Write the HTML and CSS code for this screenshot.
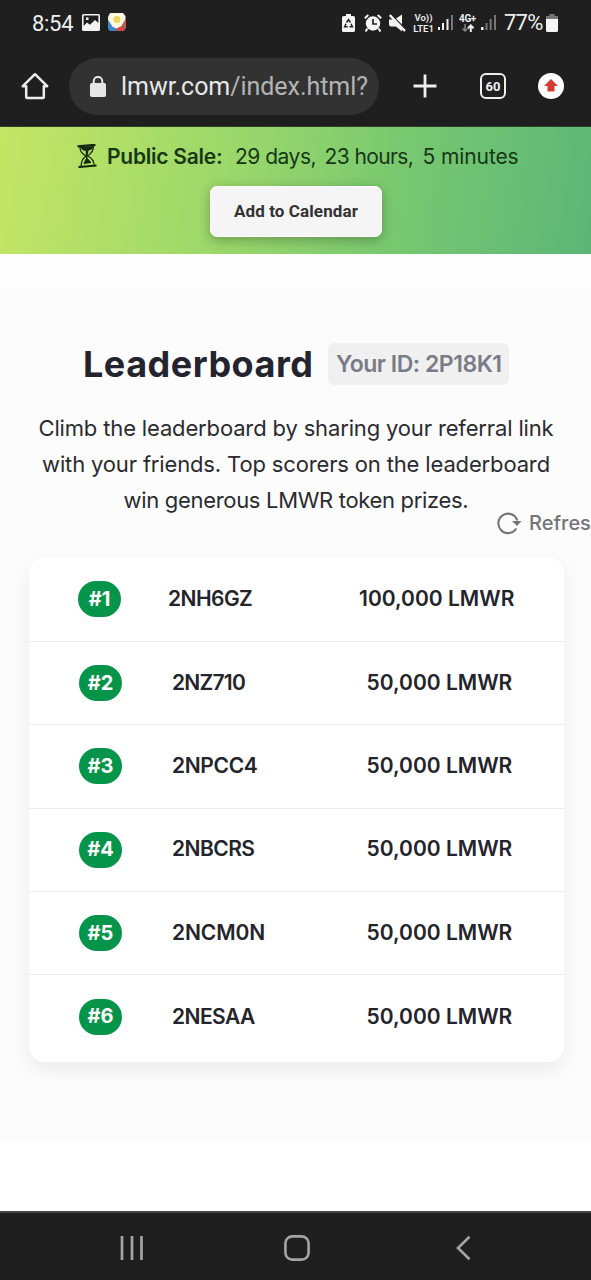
FILE: index.html
```html
<!DOCTYPE html>
<html lang="en">
<head>
<meta charset="utf-8">
<title>Leaderboard</title>
<link rel="stylesheet" href="styles.css">
</head>
<body>
<div class="screen">
  <header class="chrome">
    <div class="status">
      <span class="clock">8:54</span>
      <svg class="ic-photo" width="18" height="17" viewBox="0 0 18 17"><path fill="#f2f2f2" fill-rule="evenodd" d="M1.500 0H16.500Q18 0 18 1.500V15.500Q18 17 16.500 17H1.500Q0 17 0 15.500V1.500Q0 0 1.500 0ZM1.600 1.600V12L5 8.500L8 10.800L13 6L16.400 9V1.600ZM4 3.500H6.500V6H4Z"/></svg>
      <svg class="ic-app" width="18" height="18" viewBox="0 0 18 18"><path fill="#f4f1df" d="M2 0H15L17.500 3V15L15 18H3L0 14V4Z"/><path fill="#3f86cc" d="M0 7L5 14L8 15V18H3Q0 18 0 14Z"/><path fill="#c94a48" d="M17.500 6L13.500 13L8 15V18H14Q17.500 18 17.500 14Z"/><path fill="#fff9e5" d="M2 1H15L13 13L8.500 15.500L4 13Z"/><circle cx="9" cy="6.500" r="3.600" fill="#efd75c"/></svg>
      <div class="status-right">
        <svg width="13" height="18" viewBox="0 0 13 18"><path fill="#f4f4f4" d="M4 0H9V2H11.500Q13 2 13 3.500V16.500Q13 18 11.500 18H1.500Q0 18 0 16.500V3.500Q0 2 1.500 2H4Z"/><path fill="none" stroke="#222" stroke-width="1.500" d="M4.600 8.500L6.500 5.600L8.400 8.500M9 9.800L10.400 12.800H7.500M5.700 12.800H2.600L4 9.800"/></svg>
        <svg class="ic-alarm" width="18" height="18" viewBox="0 0 18 18"><circle cx="9" cy="9.500" r="7.200" fill="#f4f4f4"/><path stroke="#f4f4f4" stroke-width="2" d="M.800 4.300L4.300 1M17.200 4.300L13.700 1M3.500 14.500L1.500 17.500M14.500 14.500L16.500 17.500"/><path fill="none" stroke="#222" stroke-width="1.700" d="M9 5V10H13"/></svg>
        <svg class="ic-mute" width="17" height="18" viewBox="0 0 17 18"><path fill="#f4f4f4" d="M0 5.500H4L13 14V17.500L7 12.500H2Q0 12.500 0 10.500ZM7 4.500L13 .500V10.500Z"/><path stroke="#f4f4f4" stroke-width="2.400" d="M.800 1L16 17"/></svg>
        <span class="volte"><b>Vo))</b><b>LTE1</b></span>
        <svg class="ic-sig" width="15" height="17" viewBox="0 0 15 17"><path fill="#eee" d="M0 13H2V16H0ZM4 9H6V16H4ZM8.500 5H10.500V16H8.500Z"/><path fill="#777" d="M13 1H15V16H13Z"/></svg>
        <span class="net"><b>4G+</b><svg width="12" height="8" viewBox="0 0 12 8"><path fill="none" stroke="#888" stroke-width="1.400" d="M3 0V7M.500 4.500L3 7L5.500 4.500"/><path fill="none" stroke="#eee" stroke-width="2" d="M8.800 8V1.500M6 4.300L8.800 1.500L11.600 4.300"/></svg></span>
        <svg class="ic-sig2" width="15" height="17" viewBox="0 0 15 17"><path fill="#eee" d="M0 13H2.500V16H0Z"/><path fill="#777" d="M4.500 9H6.500V16H4.500ZM8.700 5H10.700V16H8.700ZM13 1H15V16H13Z"/></svg>
        <span class="pct">77%</span>
        <svg class="ic-batt" width="12" height="18" viewBox="0 0 12 18"><path fill="#777" d="M3.500 0H8.500V2H12V5H0V2H3.500Z"/><path fill="#f4f4f4" d="M0 5H12V16.500Q12 18 10.500 18H1.500Q0 18 0 16.500Z"/></svg>
      </div>
    </div>
    <div class="toolbar">
      <svg class="ic-home" width="28" height="28" viewBox="0 0 28 28"><path fill="none" stroke="#eee" stroke-width="2.500" stroke-linejoin="round" d="M1.800 14.200L14 2.200L26.200 14.200H22.800V25Q22.800 26 21.800 26H6.200Q5.200 26 5.200 25V14.200Z"/></svg>
      <div class="url">
        <svg width="16" height="21" viewBox="0 0 16 21"><rect y="7" width="16" height="14" rx="1.800" fill="#e6e6e6"/><path fill="none" stroke="#e6e6e6" stroke-width="2" d="M3.700 8V5.200A4.300 4.300 0 0 1 12.300 5.200V8"/></svg>
        <span class="address">lmwr.com<i>/index.html?</i></span>
      </div>
      <svg class="ic-plus" width="24" height="24" viewBox="0 0 24 24"><path stroke="#eee" stroke-width="2.800" d="M12 .500V23.500M.500 12H23.500"/></svg>
      <span class="tabs">60</span>
      <svg class="ic-update" width="26" height="26" viewBox="0 0 26 26"><circle cx="13" cy="13" r="13" fill="#fff"/><path fill="#d43a31" d="M13 6L20 13H16.500V18.500H9.500V13H6Z"/></svg>
    </div>
  </header>

  <section class="banner">
    <div class="sale">
      <svg width="20" height="24" viewBox="0 0 20 24"><g fill="none" stroke="#14290f"><path stroke-width="2.200" d="M.500 2.300L18.500 .800M1.500 23L19.500 21.500"/><path stroke-width="1.300" d="M3 3C3 8 5 9.500 9 12C5 15 4 17.500 4.300 22M16.500 2C16.500 7 14.500 9.500 10.500 12C15 14 17 17 17.200 21.500"/></g><path fill="#14290f" d="M3.500 3L16.500 2Q15.500 6 11.500 6.500L10.300 14Q13.500 17 14.500 19L6.500 20Q7 17.500 9 14.500L8.700 7Q4.500 6.500 3.500 3Z"/></svg>
      <b class="sale-label">Public Sale:</b>
      <span class="days">29 days,</span><span class="hours">23 hours,</span><span class="minutes">5 minutes</span>
    </div>
    <button class="calendar">Add to Calendar</button>
  </section>

  <main class="content">
    <div class="title-row"><h1>Leaderboard</h1><span class="user-id"><span>Your ID: 2P18K1</span></span></div>
    <p class="intro"><span class="l1">Climb the leaderboard by sharing your referral link</span><br><span class="l2">with your friends. Top scorers on the leaderboard</span><br><span class="l3">win generous LMWR token prizes.</span></p>
    <div class="refresh">
      <svg width="26" height="24" viewBox="0 0 26 24"><path fill="none" stroke="#747477" stroke-width="2.100" d="M20.300 17.500A9.700 9.700 0 1 1 21.300 9.500"/><path fill="#747477" d="M16 10H25.500L21 15Z"/></svg>
      <span>Refresh</span>
    </div>
    <div class="board">
      <div class="row first"><b class="rank">#1</b><span class="code">2NH6GZ</span><span class="prize">100,000 LMWR</span></div>
      <div class="row"><b class="rank">#2</b><span class="code c2">2NZ710</span><span class="prize">50,000 LMWR</span></div>
      <div class="row"><b class="rank">#3</b><span class="code c3">2NPCC4</span><span class="prize">50,000 LMWR</span></div>
      <div class="row"><b class="rank">#4</b><span class="code">2NBCRS</span><span class="prize">50,000 LMWR</span></div>
      <div class="row"><b class="rank">#5</b><span class="code c5">2NCM0N</span><span class="prize">50,000 LMWR</span></div>
      <div class="row"><b class="rank">#6</b><span class="code">2NESAA</span><span class="prize">50,000 LMWR</span></div>
    </div>
  </main>
  <div class="spacer"></div>
  <nav class="navbar">
    <svg width="24" height="26" viewBox="0 0 24 26"><path stroke="#a5a5a5" stroke-width="2.700" d="M2 1V25M12 1V25M21.500 1V25"/></svg>
    <svg width="26" height="26" viewBox="0 0 26 26"><rect x="1.400" y="1.400" width="23.200" height="23.200" rx="7" fill="none" stroke="#a5a5a5" stroke-width="2.600"/></svg>
    <svg width="15" height="26" viewBox="0 0 15 26"><path fill="none" stroke="#a5a5a5" stroke-width="2.600" d="M13.500 1.800L2 13L13.500 24.200"/></svg>
  </nav>
</div>
</body>
</html>
```
FILE: styles.css
```css
* { box-sizing: border-box; }
body { margin: 0; background: #fff; font-family: Inter, "Liberation Sans", sans-serif; }
svg { display: block; flex: none; }
.screen { width: 591px; height: 1280px; overflow: hidden; display: flex; flex-direction: column; white-space: nowrap; }
.chrome { height: 127px; background: #1f1f1f; flex: none; border-bottom: 1px solid #314229; color: #eee; font-family: Roboto, sans-serif; }
.status { height: 46px; display: flex; align-items: center; padding-left: 32px; }
.clock { font-size: 22px; width: 50px; letter-spacing: -.3px; }
.ic-photo { margin-top: -2px; }
.ic-app { margin-left: 8px; margin-top: -2px; }
.status-right { display: flex; align-items: center; margin-left: 216px; margin-top: -1px; }
.ic-alarm { margin-left: 9px; }
.ic-mute { margin-left: 7px; }
.volte { margin-left: 6px; width: 23px; font-size: 9.5px; line-height: 11px; display: flex; flex-direction: column; align-items: center; }
.volte b { font-weight: 600; }
.ic-sig { margin-left: 3px; }
.net { width: 17px; margin-left: 6px; font-size: 10px; line-height: 10px; display: flex; flex-direction: column; align-items: center; }
.net b { font-weight: 700; letter-spacing: -.4px; }
.ic-sig2 { margin-left: 5px; }
.pct { margin-left: 8px; width: 42px; font-size: 22px; letter-spacing: -.8px; }
.toolbar { height: 80px; display: flex; align-items: center; padding-left: 21px; }
.url { width: 310px; height: 57px; margin-left: 20px; border-radius: 29px; background: #323232; padding-left: 21px; display: flex; align-items: center; gap: 15px; }
.address { font-size: 25px; letter-spacing: -.05px; color: #e7e7e7; }
.address i { font-style: normal; color: #b4b4b4; }
.ic-plus { margin-left: 34px; }
.tabs { width: 26px; height: 26px; margin-left: 43px; border: 2.500px solid #eee; border-radius: 6px; display: flex; align-items: center; justify-content: center; font-size: 13px; font-weight: 700; }
.ic-update { margin-left: 32px; }
.banner { height: 127px; flex: none; background: linear-gradient(99deg, #c4e664 0%, #97d66b 42%, #78c870 67%, #5bb677 100%); box-shadow: 0 4px 24px rgba(0,0,0,.06); }
.sale { height: 59px; display: flex; align-items: center; padding: 0 0 1px 77px; color: #173716; font-size: 21px; }
.sale-label { margin-left: 10px; width: 128px; font-weight: 600; letter-spacing: -.25px; }
.days { width: 89.5px; letter-spacing: -.5px; }
.hours { width: 98px; letter-spacing: -.6px; }
.minutes { letter-spacing: -.1px; }
.calendar { display: block; width: 172px; height: 51px; margin: 0 0 0 210px; padding: 0 0 1px; border: 1px solid #fff; border-radius: 7px; background: #f5f5f5; box-shadow: 0 3px 12px rgba(0,0,0,.28); font: 700 17px Roboto, sans-serif; letter-spacing: .1px; color: #333; }
.content { height: 887px; flex: none; background: linear-gradient(#fff 0, #fcfcfc 40px); padding: 89px 0 0 28px; }
.title-row { display: flex; align-items: center; padding-left: 55px; height: 42px; }
h1 { width: 245px; margin: 0; font-size: 36px; line-height: 42px; font-weight: 650; letter-spacing: .5px; color: #24242e; }
.user-id { width: 181px; height: 42px; line-height: 42px; border-radius: 6px; background: #f0f0f1; padding-left: 8px; font-size: 23px; font-weight: 600; letter-spacing: -.48px; color: #7b7b87; }
.intro { width: 536px; margin: 25px 0 0; font-size: 22px; line-height: 36px; text-align: center; color: #2b2b2f; }
.l1, .l2 { letter-spacing: -.15px; }
.l3 { letter-spacing: -.32px; }
.refresh { display: flex; align-items: center; height: 26px; margin-top: -8px; padding-left: 468px; color: #747477; font-size: 20px; font-weight: 500; gap: 7px; }
.board { width: 535px; height: 505px; margin: 21px 0 0 1px; border-radius: 16px; background: #fff; box-shadow: 0 8px 20px rgba(0,0,0,.07); }
.row { height: 83.3px; display: flex; align-items: center; padding-left: 50px; border-bottom: 1.500px solid #ebebec; font-size: 21px; font-weight: 600; color: #24242b; }
.row:last-child { border: 0; }
.row.first { height: 85px; padding-left: 49px; }
.rank { width: 43px; height: 36px; border-radius: 18px; padding-bottom: 1px; background: #06944b; color: #fff; display: flex; align-items: center; justify-content: center; font-size: 20px; font-weight: 700; }
.code { margin-left: 50px; width: 194.5px; letter-spacing: -.55px; }
.code, .prize { padding-bottom: 1.500px; }
.c2 { letter-spacing: -.75px; }
.c3 { letter-spacing: -.35px; }
.c5 { letter-spacing: -.1px; }
.first .code { margin-left: 47px; width: 191px; }
.spacer { height: 70px; flex: none; background: #fff; }
.navbar { height: 69px; flex: none; background: #1f1f1f; border-top: 2px solid #444; display: flex; align-items: center; padding: 2px 0 0 120px; }
.navbar svg:nth-child(2) { margin-left: 140px; }
.navbar svg:nth-child(3) { margin-left: 146px; }
```
